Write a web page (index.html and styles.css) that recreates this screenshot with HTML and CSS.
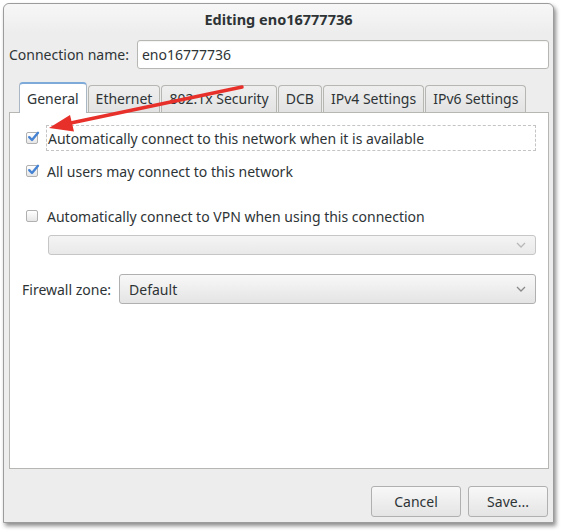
FILE: index.html
```html
<!DOCTYPE html>
<html>
<head>
<meta charset="utf-8">
<link rel="stylesheet" href="styles.css">
</head>
<body>
<div class="dialog">
  <div class="titlebar">Editing eno16777736</div>
  <div class="name-row">
    <label class="name-label">Connection name:</label>
    <div class="entry">eno16777736</div>
  </div>
  <div class="notebook">
    <div class="tabs">
      <div class="tab active">General</div>
      <div class="tab">Ethernet</div>
      <div class="tab">802.1x Security</div>
      <div class="tab">DCB</div>
      <div class="tab">IPv4 Settings</div>
      <div class="tab">IPv6 Settings</div>
    </div>
    <div class="panel">
      <div class="check-row focus">
        <span class="checkbox checked"><svg width="12" height="12" viewBox="0 0 12 12"><path d="M2.2 6.2 L5 9 L11 1.8" fill="none" stroke="#4683d3" stroke-width="2.4" stroke-linecap="round" stroke-linejoin="round"/></svg></span>
        <span class="check-label">Automatically connect to this network when it is available</span>
      </div>
      <div class="check-row second">
        <span class="checkbox checked"><svg width="12" height="12" viewBox="0 0 12 12"><path d="M2.2 6.2 L5 9 L11 1.8" fill="none" stroke="#4683d3" stroke-width="2.4" stroke-linecap="round" stroke-linejoin="round"/></svg></span>
        <span class="check-label">All users may connect to this network</span>
      </div>
      <div class="check-row third">
        <span class="checkbox"></span>
        <span class="check-label">Automatically connect to VPN when using this connection</span>
      </div>
      <div class="combo disabled">
        <span></span>
        <svg class="chev" width="10" height="6" viewBox="0 0 10 6"><path d="M1 1 L5 5 L9 1" fill="none" stroke="#b8b8b8" stroke-width="1.3"/></svg>
      </div>
      <div class="fw-row">
        <span class="fw-label">Firewall zone:</span>
        <div class="combo fw">
          <span>Default</span>
          <svg class="chev" width="10" height="6" viewBox="0 0 10 6"><path d="M1 1 L5 5 L9 1" fill="none" stroke="#8a8a8a" stroke-width="1.3"/></svg>
        </div>
      </div>
    </div>
  </div>
  <div class="buttons">
    <button class="btn cancel">Cancel</button>
    <button class="btn save">Save...</button>
  </div>
</div>
<svg class="arrow" width="562" height="531" viewBox="0 0 562 531">
  <line x1="242" y1="87" x2="66" y2="124" stroke="#e8302a" stroke-width="3.5" stroke-linecap="round"/>
  <polygon points="49,128 70,115 74,131.5" fill="#e8302a"/>
</svg>
</body>
</html>
```

FILE: styles.css
```css
html, body {
  margin: 0;
  padding: 0;
  background: #ffffff;
}
body {
  position: relative;
  width: 562px;
  height: 531px;
  overflow: hidden;
  font-family: "Noto Sans", "DejaVu Sans", sans-serif;
  font-size: 14px;
  color: #2e3436;
}
.dialog {
  margin: 3px 0 0 3px;
  width: 551px;
  height: 520px;
  box-sizing: border-box;
  border: 1px solid #9c9c9c;
  border-radius: 6px 6px 0 0;
  background: #ededed;
  display: flex;
  flex-direction: column;
  box-shadow: 2px 3px 4px rgba(0,0,0,0.45);
}
.titlebar {
  height: 29px;
  display: flex;
  align-items: center;
  justify-content: center;
  font-weight: bold;
  font-size: 14.5px;
  color: #2e3436;
  background: linear-gradient(#f7f7f7, #ededed);
  border-radius: 6px 6px 0 0;
}
.name-row {
  display: flex;
  align-items: center;
  margin-top: 7px;
  padding: 0 4px 0 5px;
  gap: 8px;
}
.name-label {
  flex: none;
  white-space: nowrap;
}
.entry {
  flex: 1;
  min-width: 0;
  height: 29px;
  box-sizing: border-box;
  border: 1px solid #b6b6b3;
  border-radius: 3px;
  background: #ffffff;
  padding: 0 4px;
  display: flex;
  align-items: center;
  box-shadow: inset 0 1px 1px rgba(0,0,0,0.05);
}
.notebook {
  margin: 13px 4px 0 5px;
  display: flex;
  flex-direction: column;
}
.tabs {
  display: flex;
  align-items: flex-end;
  padding-left: 10px;
  height: 30px;
  position: relative;
  z-index: 1;
}
.tab {
  height: 27px;
  box-sizing: border-box;
  padding: 0 7px 2px;
  margin-right: 1px;
  display: flex;
  align-items: center;
  justify-content: center;
  white-space: nowrap;
  border: 1px solid #b6b6b3;
  border-bottom: none;
  border-radius: 4px 4px 0 0;
  background: linear-gradient(#efefef, #e3e3e3);
  color: #2e3436;
}
.tab.active {
  height: 31px;
  margin-bottom: -1px;
  background: #ffffff;
  padding: 0 7px 0;
  border-color: #a9b6c4;
  border-top: 2px solid #7eaad9;
}
.panel {
  height: 357px;
  box-sizing: border-box;
  background: #ffffff;
  border: 1px solid #b6b6b3;
  padding: 12px 12px 0 15px;
  display: flex;
  flex-direction: column;
}
.check-row {
  display: flex;
  align-items: center;
  height: 26px;
  gap: 9px;
}
.check-row.focus .check-label {
  border: 1px dashed #c4c4c4;
  height: 26px;
  box-sizing: border-box;
  display: flex;
  align-items: center;
  padding-left: 1px;
  margin-left: -1px;
  flex: 1;
}
.check-row.second {
  margin-top: 7px;
}
.check-row.third {
  margin-top: 19px;
}
.checkbox {
  width: 12px;
  height: 12px;
  box-sizing: border-box;
  border: 1px solid #b0b0b0;
  border-radius: 2px;
  background: linear-gradient(#ffffff, #e6e6e6);
  display: flex;
  align-items: center;
  justify-content: center;
  flex: none;
  margin-left: 1px;
}
.checkbox svg {
  margin-top: -2px;
  margin-left: 2px;
  overflow: visible;
  flex: none;
}
.combo {
  box-sizing: border-box;
  border: 1px solid #b6b6b3;
  border-radius: 3px;
  display: flex;
  align-items: center;
  justify-content: space-between;
  padding: 0 9px 0 8px;
}
.combo.disabled {
  margin: 6px 0 0 23px;
  height: 20px;
  background: linear-gradient(#f4f4f4, #e9e9e9);
  border-color: #c6c6c6;
}
.fw-row {
  display: flex;
  align-items: center;
  margin-top: 19px;
  margin-left: -3px;
  gap: 8px;
}
.combo.fw {
  flex: 1;
  height: 30px;
  background: linear-gradient(#f8f8f8, #e4e4e4);
  border-color: #b0b0b0;
  padding-left: 9px;
}
.buttons {
  display: flex;
  justify-content: flex-end;
  gap: 7px;
  margin: 17px 5px 0 0;
}
.btn {
  font-family: "Noto Sans", "DejaVu Sans", sans-serif;
  font-size: 14px;
  color: #2e3436;
  height: 31px;
  border: 1px solid #b0b0b0;
  border-radius: 3px;
  background: linear-gradient(#f8f8f8, #e4e4e4);
  padding: 0;
}
.btn.cancel {
  width: 90px;
}
.btn.save {
  width: 80px;
}
.arrow {
  position: absolute;
  left: 0;
  top: 0;
  z-index: 10;
  pointer-events: none;
}
```
